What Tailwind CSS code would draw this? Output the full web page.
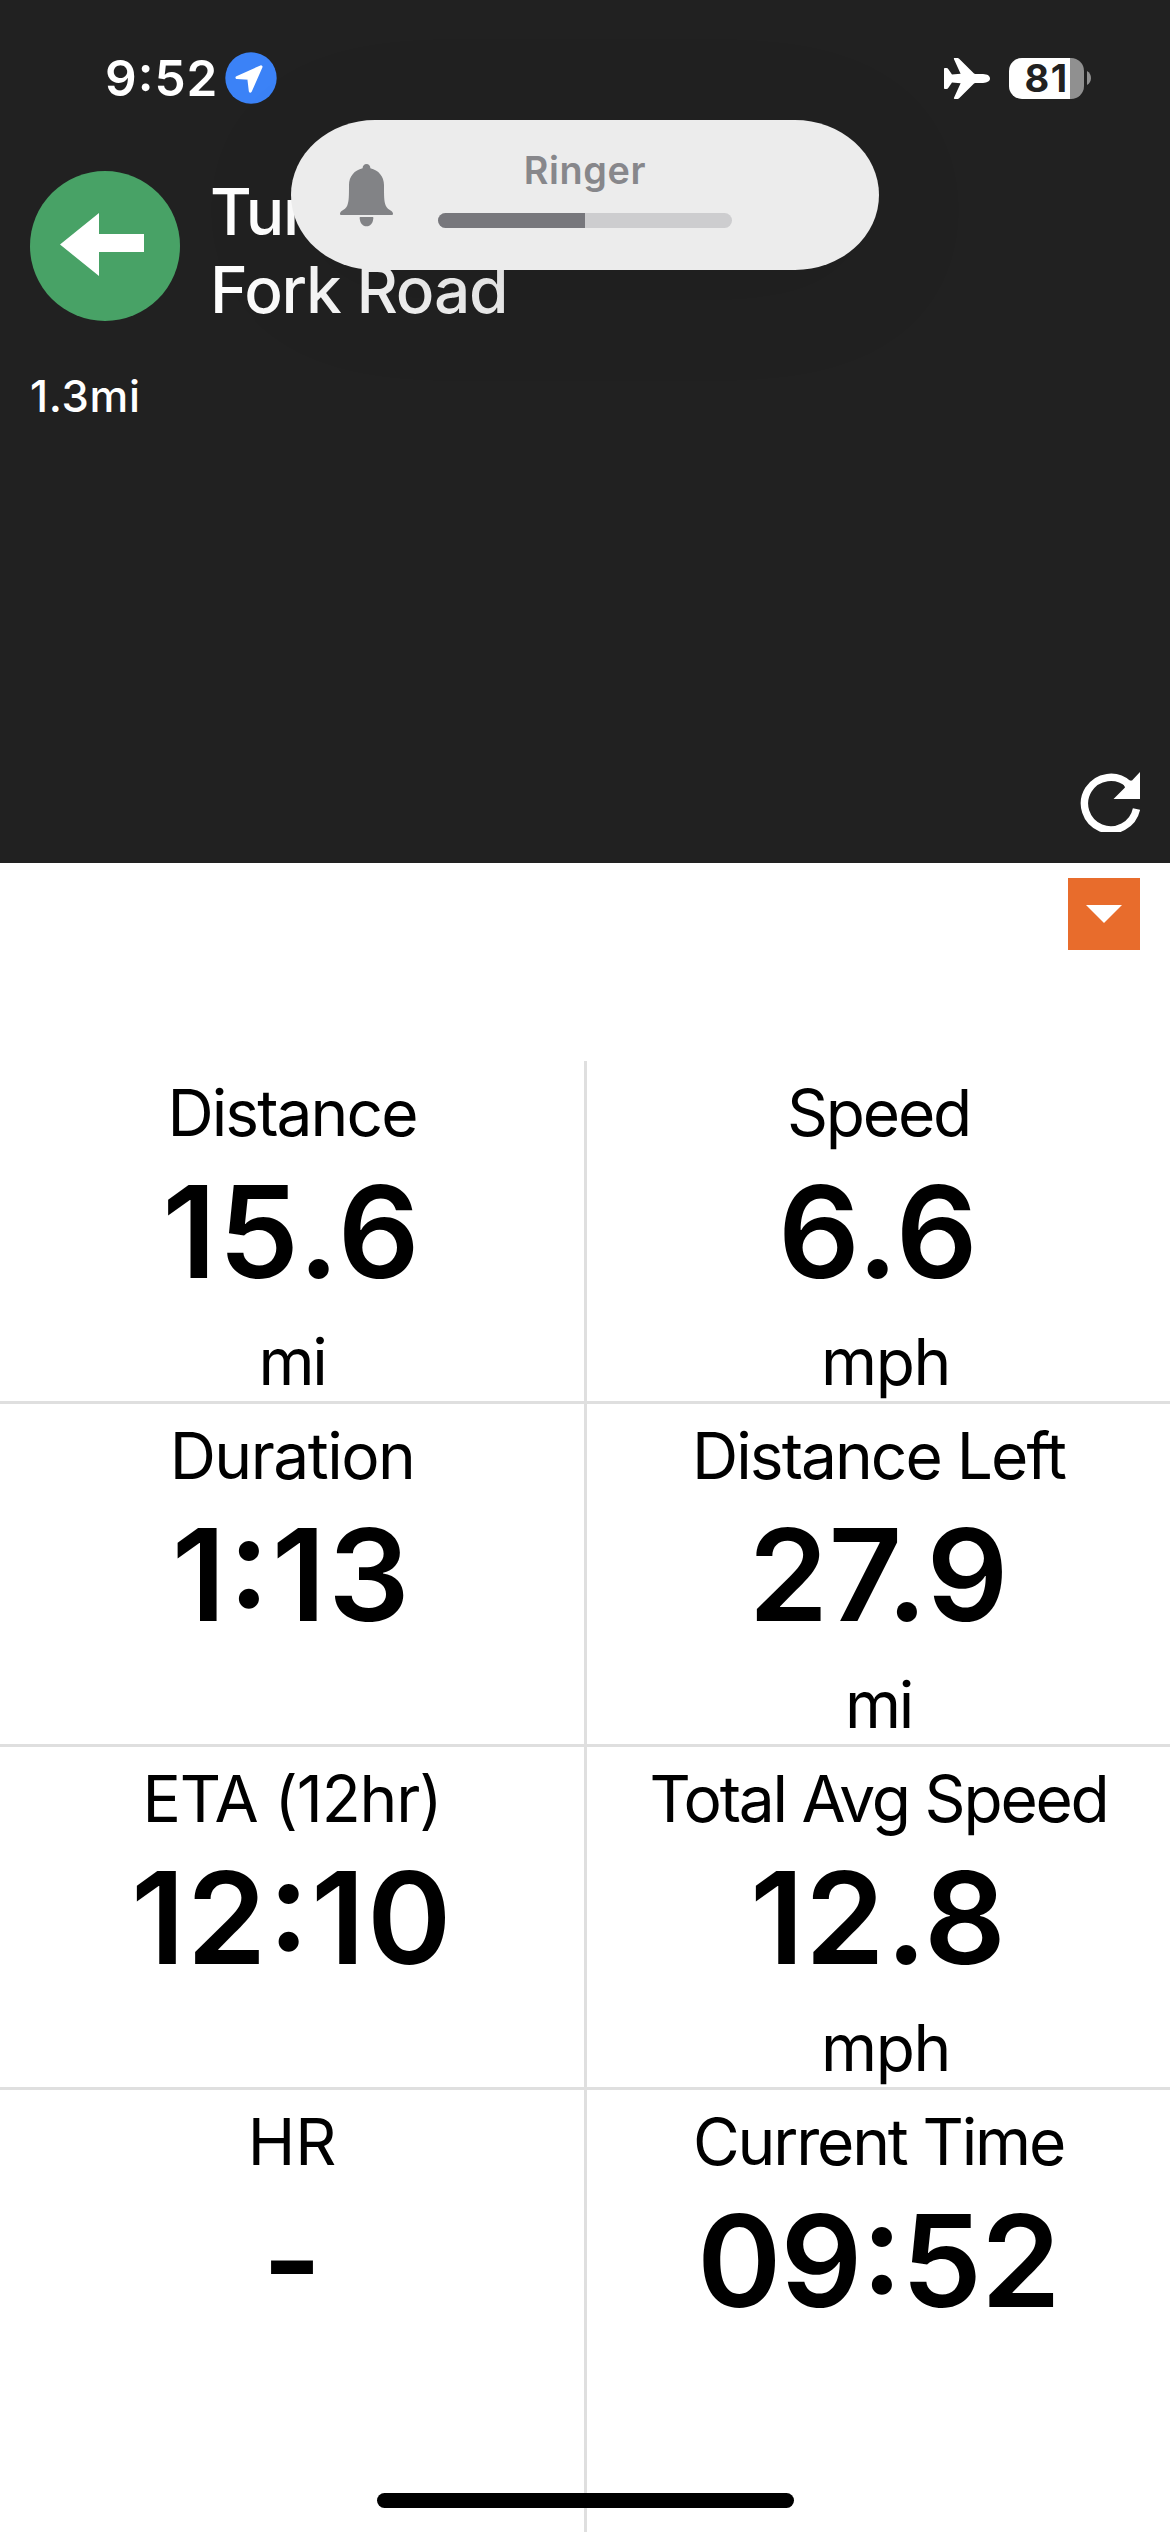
<!DOCTYPE html>
<html lang="en">
<head>
<meta charset="utf-8">
<title>Ride</title>
<script src="https://cdn.jsdelivr.net/npm/@tailwindcss/browser@4"></script>
</head>
<body class="relative flex h-[2532px] w-[1170px] flex-col overflow-hidden bg-white font-[Inter,sans-serif] text-black">

  <header class="flex h-[863px] flex-col bg-[#212121] text-white">
    <!-- Status bar -->
    <div class="flex h-[156px] items-center justify-between pr-[79px] pl-[105px]">
      <div class="flex items-center">
        <span class="w-[120px] text-[49.5px] leading-[60px] font-semibold tracking-[0.97px] [font-feature-settings:'case']">9:52</span>
        <svg class="size-[52px]" viewBox="0 0 52 52">
          <circle cx="26" cy="26" r="25.7" fill="#3b82f7"/>
          <path d="M36 14.8 12 25.6 23.8 26.3 25.3 39.2Z" fill="#fff" stroke="#fff" stroke-width="3" stroke-linejoin="round"/>
        </svg>
      </div>
      <div class="flex items-center">
        <svg class="h-[43px] w-[46px]" viewBox="0 0 46 43" fill="#fff">
          <path d="M46 21.5C46 19 43.5 17.3 39 17.1L32 17C30.8 17 30.2 16.7 29.5 15.9L15.4 2C14.6 1.2 14 1 13 1H10.6C9.9 1 9.7 1.5 10 2.2L16.6 16.8 8 17.6 4.4 12.2C3.9 11.4 3.3 11 2.4 11H.8C.2 11 0 11.3 0 11.9V31.1C0 31.7.2 32 .8 32H2.4C3.3 32 3.9 31.6 4.4 30.8L8 25.4 16.6 26.2 10 40.8C9.7 41.5 9.9 42 10.6 42H13C14 42 14.6 41.8 15.4 41L29.5 27.1C30.2 26.3 30.8 26 32 26L39 25.9C43.5 25.7 46 24 46 21.5Z"/>
        </svg>
        <div class="ml-[19px] flex h-[41px] w-[75px] items-center justify-center rounded-[13px] bg-[linear-gradient(to_right,#fff_61px,#909090_61px)] text-[38px] leading-[41px] font-bold tracking-[1.5px] text-[#212121]">81</div>
        <svg class="ml-[3px] h-[14px] w-[4px]" viewBox="0 0 4 14"><path d="M0 0C5.3 2.5 5.3 11.5 0 14Z" fill="#909090"/></svg>
      </div>
    </div>

    <!-- Next turn -->
    <div class="flex gap-[29px] px-[30px] pt-[15px]">
      <svg class="size-[150px]" viewBox="0 0 150 150">
        <circle cx="75" cy="75" r="75" fill="#48a266"/>
        <path d="M30 73.5 69 42V63H114V81H69V105Z" fill="#fff"/>
      </svg>
      <div class="pt-[2px] pl-px text-[64px] leading-[78px] font-medium tracking-[-1.23px]">
        <div>Turn</div>
        <div class="bg-[linear-gradient(to_right,#fff,#ebebeb)] bg-clip-text text-transparent">Fork Road</div>
      </div>
    </div>
    <div class="mt-[38px] px-[30px] text-[43.6px] leading-[60px] font-medium tracking-[0.69px]">1.3mi</div>

    <div class="mt-auto flex justify-end pr-[30px] pb-[31px]">
      <svg class="size-[60px]" viewBox="0 0 60 60">
        <path d="M48.5 12.2A26.3 26.3 0 1 0 56.5 37" fill="none" stroke="#fff" stroke-width="7.4"/>
        <path d="M60 0V27H33.500L45 15.500 42.500 9 52 8.500Z" fill="#fff"/>
      </svg>
    </div>
  </header>

  <div class="flex h-[198px] justify-end pt-[15px] pr-[30px]">
    <div class="flex size-[72px] items-center justify-center bg-[#e86c2c]">
      <svg class="h-[18px] w-[36px]" viewBox="0 0 36 18"><path d="M0 0H36L18 18Z" fill="#fff"/></svg>
    </div>
  </div>

  <!-- Ride metrics -->
  <main class="grid h-[1471px] grid-cols-[587px_583px] grid-rows-[343px_343px_343px_442px] text-center text-[64px] leading-[78px]">
    <section class="border-r-3 border-b-3 border-[#dfdfdf] pt-[13px]">
      <div class="tracking-[-1.9px]">Distance</div>
      <div class="mt-px text-[128px] leading-[158px] font-semibold tracking-[2.2px]">15.6</div>
      <div class="mt-[12px] tracking-[-2.4px]">mi</div>
    </section>
    <section class="border-b-3 border-[#dfdfdf] pt-[13px]">
      <div class="tracking-[-2.2px]">Speed</div>
      <div class="mt-px text-[128px] leading-[158px] font-semibold tracking-[1.4px]">6.6</div>
      <div class="mt-[12px] pl-[14px] tracking-[-1.4px]">mph</div>
    </section>

    <section class="border-r-3 border-b-3 border-[#dfdfdf] pt-[13px]">
      <div class="tracking-[-1.5px]">Duration</div>
      <div class="mt-px text-[128px] leading-[158px] font-semibold tracking-[2.5px] [font-feature-settings:'case']">1:13</div>
    </section>
    <section class="border-b-3 border-[#dfdfdf] pt-[13px]">
      <div class="tracking-[-1.95px]">Distance Left</div>
      <div class="mt-px text-[128px] leading-[158px] font-semibold tracking-[0.35px]">27.9</div>
      <div class="mt-[12px] tracking-[-2.4px]">mi</div>
    </section>

    <section class="border-r-3 border-b-3 border-[#dfdfdf] pt-[13px]">
      <div class="tracking-[-1.1px]">ETA (12hr)</div>
      <div class="mt-px text-[128px] leading-[158px] font-semibold tracking-[1.8px] [font-feature-settings:'case']">12:10</div>
    </section>
    <section class="border-b-3 border-[#dfdfdf] pt-[13px]">
      <div class="tracking-[-2.2px]">Total Avg Speed</div>
      <div class="mt-px text-[128px] leading-[158px] font-semibold tracking-[0.9px]">12.8</div>
      <div class="mt-[12px] pl-[14px] tracking-[-1.4px]">mph</div>
    </section>

    <section class="border-r-3 border-[#dfdfdf] pt-[13px]">
      <div>HR</div>
      <div class="text-[128px] leading-[158px] font-semibold">-</div>
    </section>
    <section class="pt-[13px]">
      <div class="tracking-[-2.15px]">Current Time</div>
      <div class="mt-px text-[128px] leading-[158px] font-semibold tracking-[-0.9px] [font-feature-settings:'case']">09:52</div>
    </section>
  </main>

  <!-- Ringer volume overlay -->
  <div class="absolute top-[120px] left-[291px] flex h-[150px] w-[588px] rounded-[84px/75px] bg-[#ececec] pl-[49px] shadow-[0_15px_120px_rgba(0,0,0,0.08)]">
    <svg class="mt-[44px] h-[63px] w-[53px]" viewBox="0 0 53 63" fill="#828386">
      <path d="M26.5 0C28.8 0 30.3 1.8 30.4 4.2 38.5 6 44 12.5 44 21C44 32 44 37 45.7 41.5 46.8 44.3 49 45.3 51 46.8 52.6 48 53 49 53 49.8 53 50.7 52.5 51 51.6 51H1.4C.5 51 0 50.7 0 49.8 0 49 .4 48 2 46.8 4 45.3 6.2 44.3 7.3 41.5 9 37 9 32 9 21 9 12.5 14.5 6 22.6 4.2 22.7 1.8 24.2 0 26.5 0Z"/>
      <path d="M20.3 53H32.7C33.3 53 33.3 53.4 33.3 54.2 33 59 30.5 62.3 26.5 62.3S20 59 19.7 54.2C19.7 53.4 19.7 53 20.3 53Z"/>
    </svg>
    <div class="ml-[45px] flex w-[294px] flex-col pt-[26px]">
      <div class="text-center text-[37.8px] leading-[48px] font-semibold tracking-[0.6px] text-[#87878b]">Ringer</div>
      <div class="mt-[19px] h-[15px] overflow-hidden rounded-full bg-[#cdcdcf]">
        <div class="h-full bg-[#77777c]" style="width:50%"></div>
      </div>
    </div>
  </div>

  <!-- Home indicator -->
  <div class="absolute top-[2493px] left-[377px] h-[15px] w-[417px] rounded-full bg-black"></div>
</body>
</html>
